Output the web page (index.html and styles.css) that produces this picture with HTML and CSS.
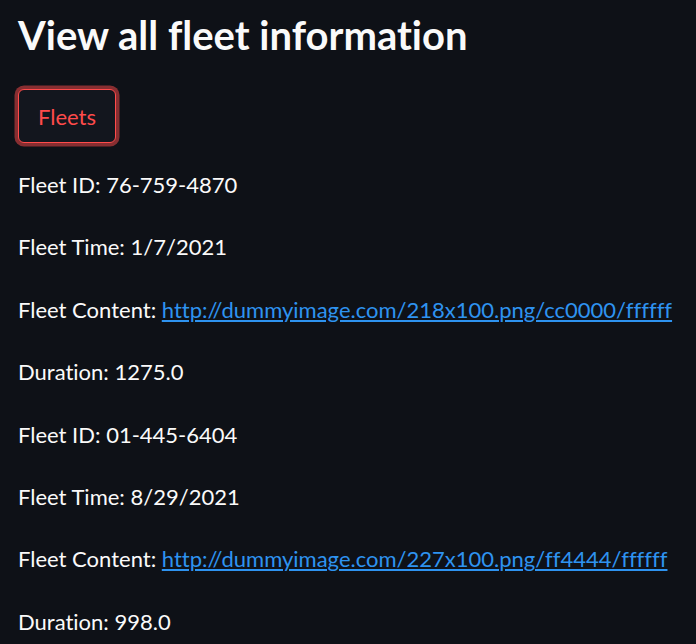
FILE: index.html
```html
<!DOCTYPE html>
<html>
<head>
<meta charset="utf-8">
<link rel="stylesheet" href="styles.css">
</head>
<body>
<main class="page">
  <h1 class="title">View all fleet information</h1>
  <div class="actions"><button class="btn">Fleets</button></div>
  <div class="list">
    <p class="row">Fleet ID: 76-759-4870</p>
    <p class="row">Fleet Time: 1/7/2021</p>
    <p class="row">Fleet Content: <a class="link" href="#">http://dummyimage.com/218x100.png/cc0000/ffffff</a></p>
    <p class="row">Duration: 1275.0</p>
    <p class="row">Fleet ID: 01-445-6404</p>
    <p class="row">Fleet Time: 8/29/2021</p>
    <p class="row">Fleet Content: <a class="link" href="#">http://dummyimage.com/227x100.png/ff4444/ffffff</a></p>
    <p class="row">Duration: 998.0</p>
  </div>
</main>
</body>
</html>
```
FILE: styles.css
```css
html, body {
  margin: 0;
  padding: 0;
  background: #0e1117;
  color: #fafafa;
  font-family: Lato, "Noto Sans", sans-serif;
  font-variant-ligatures: none;
}
.page {
  padding: 9px 0 0 18px;
  display: flex;
  flex-direction: column;
}
.title {
  margin: 0;
  font-size: 40px;
  line-height: 52px;
  font-weight: 700;
}
.actions {
  margin-top: 28px;
  display: flex;
}
.btn {
  box-sizing: border-box;
  width: 98px;
  height: 54px;
  background: #13161e;
  color: #ff4b4b;
  border: 1px solid #ff4b4b;
  border-radius: 6px;
  box-shadow: 0 0 0 3.5px rgba(255, 75, 75, 0.5);
  font-family: inherit;
  font-size: 22px;
  padding: 0;
}
.list {
  margin-top: 27px;
  display: flex;
  flex-direction: column;
}
.row {
  margin: 0 0 32.4px 0;
  font-size: 22px;
  line-height: 30px;
  white-space: nowrap;
}
.link {
  color: #2e93f0;
  text-decoration: underline;
}
```
